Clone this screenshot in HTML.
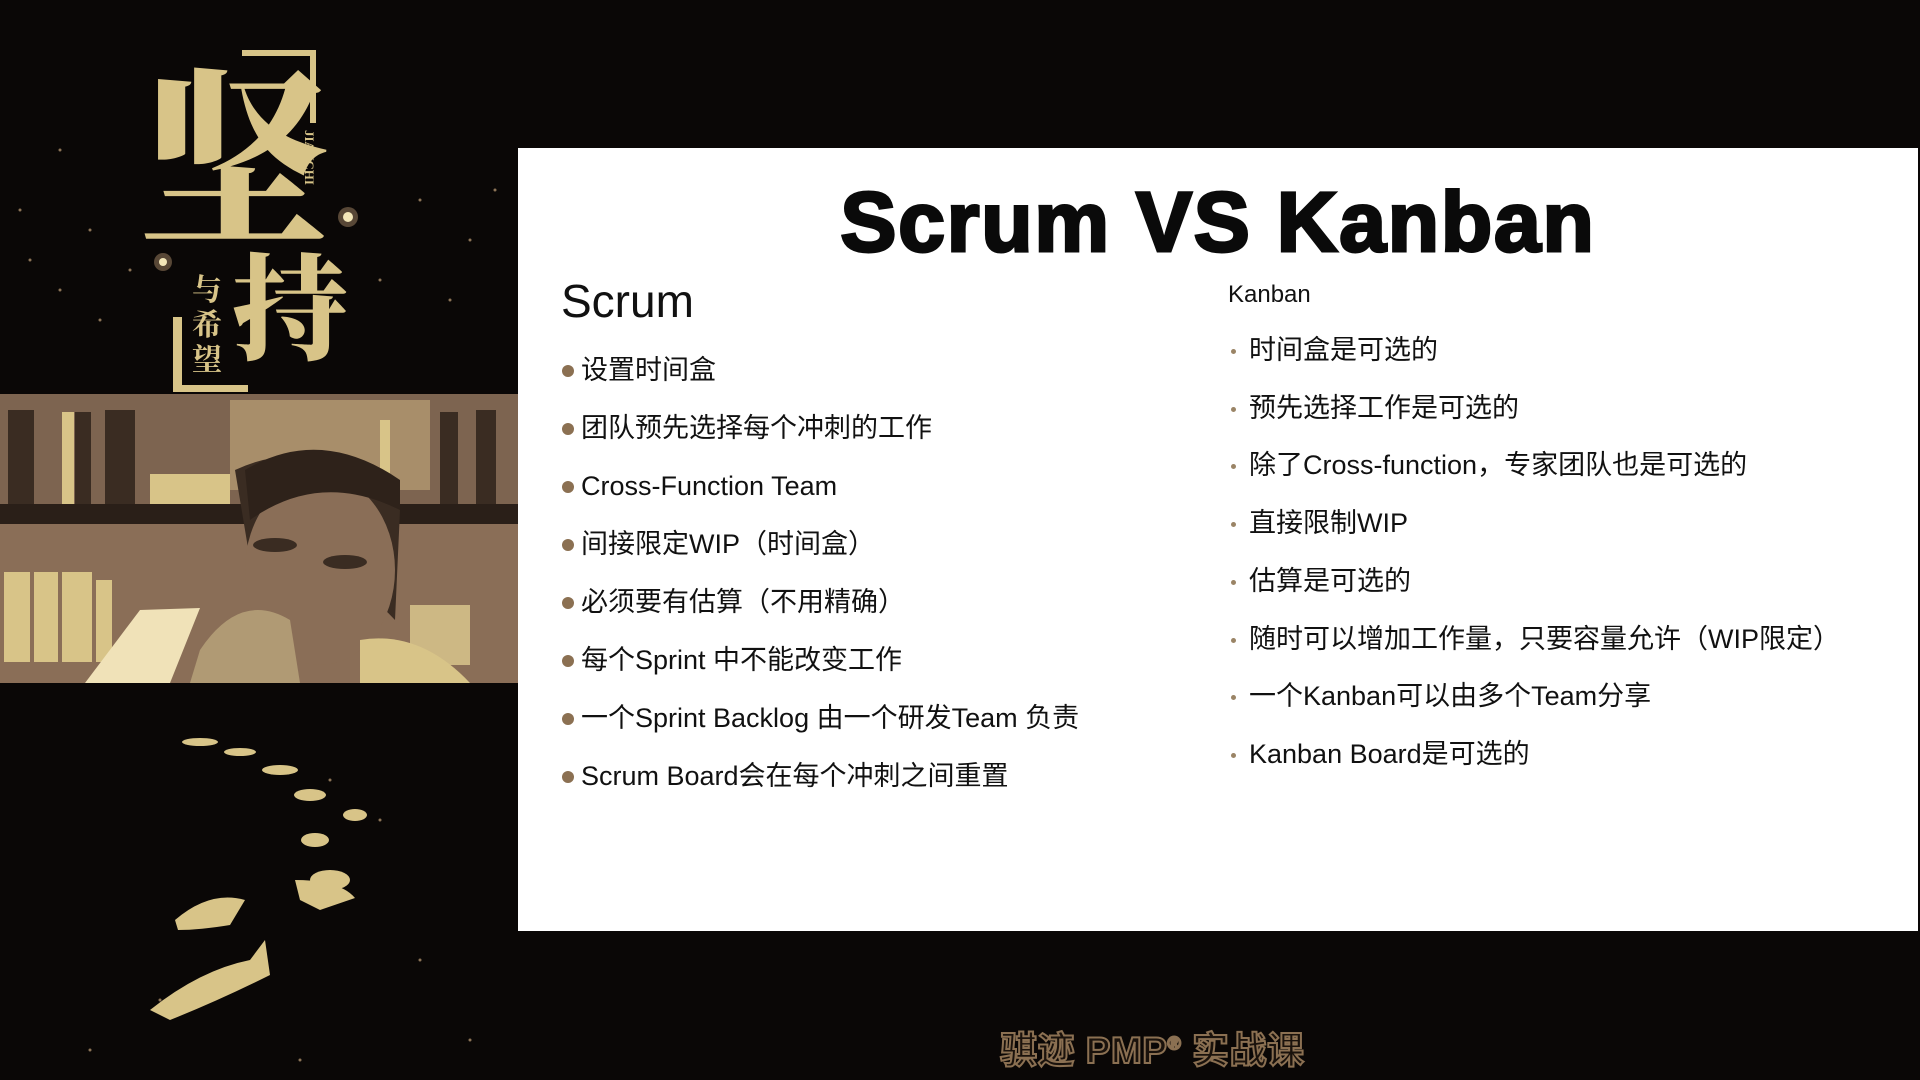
<!DOCTYPE html>
<html><head><meta charset="utf-8"><style>
html,body{margin:0;padding:0;width:1920px;height:1080px;overflow:hidden;background:#0a0706;}
body{position:relative;font-family:"Liberation Sans","Noto Sans CJK SC",sans-serif;}
.slide{position:absolute;left:518px;top:148px;width:1400px;height:783px;background:#fff;}
.title{position:absolute;left:0;width:1400px;top:32px;text-align:center;font-size:84px;font-weight:bold;color:#0a0a0a;-webkit-text-stroke:3px #0a0a0a;letter-spacing:1.8px;line-height:1;}
.abs{position:absolute;white-space:nowrap;color:#111;line-height:1;}
.l{font-size:27px;}
.dot{position:absolute;width:12px;height:12px;border-radius:50%;background:#8b7052;}
.sd{position:absolute;width:5px;height:5px;border-radius:50%;background:#9a8466;}
</style></head><body>
<svg style="position:absolute;left:0;top:0" width="518" height="1080">
<rect width="518" height="1080" fill="#0a0706"/>
<g fill="#8c7356">
<circle cx="60" cy="150" r="1.5"/><circle cx="90" cy="230" r="1.5"/><circle cx="30" cy="260" r="1.5"/><circle cx="420" cy="200" r="1.5"/><circle cx="470" cy="240" r="1.5"/><circle cx="450" cy="300" r="1.5"/><circle cx="100" cy="320" r="1.5"/><circle cx="380" cy="280" r="1.5"/><circle cx="60" cy="290" r="1.5"/><circle cx="495" cy="190" r="1.5"/><circle cx="20" cy="210" r="1.5"/><circle cx="130" cy="270" r="1.5"/>
<circle cx="330" cy="780" r="1.5"/><circle cx="380" cy="820" r="1.5"/><circle cx="230" cy="900" r="1.5"/><circle cx="420" cy="960" r="1.5"/><circle cx="160" cy="1000" r="1.5"/><circle cx="470" cy="1040" r="1.5"/><circle cx="300" cy="1060" r="1.5"/><circle cx="90" cy="1050" r="1.5"/>
</g>
<circle cx="348" cy="217" r="10" fill="#8c7356" opacity=".6"/><circle cx="348" cy="217" r="5" fill="#f3e6b8"/>
<circle cx="163" cy="262" r="9" fill="#8c7356" opacity=".6"/><circle cx="163" cy="262" r="4" fill="#f3e6b8"/>
<g fill="#d8c488">
<rect x="242" y="50" width="74" height="6"/><rect x="310" y="50" width="6" height="73"/>
<rect x="173" y="317" width="9" height="73"/><rect x="173" y="385" width="75" height="7"/>
</g>
<text x="140" y="230" font-family="Noto Serif CJK SC,serif" font-size="190" font-weight="900" fill="#d8c488">坚</text>
<text x="232" y="350" font-family="Noto Serif CJK SC,serif" font-size="115" font-weight="900" fill="#d8c488">持</text>
<text x="192" y="300" font-family="Noto Serif CJK SC,serif" font-size="30" font-weight="bold" fill="#d8c488">与</text>
<text x="192" y="335" font-family="Noto Serif CJK SC,serif" font-size="30" font-weight="bold" fill="#d8c488">希</text>
<text x="192" y="370" font-family="Noto Serif CJK SC,serif" font-size="30" font-weight="bold" fill="#d8c488">望</text>
<text transform="translate(305,130) rotate(90)" font-size="13" font-weight="bold" fill="#d8c488" font-family="Liberation Serif,serif">JIANCHI</text>
<rect x="0" y="394" width="518" height="289" fill="#8a6e57"/>
<rect x="0" y="394" width="518" height="110" fill="#7d6450"/>
<rect x="230" y="400" width="200" height="90" fill="#a88e6a"/>
<g fill="#3a2c22"><rect x="8" y="410" width="26" height="100"/><rect x="75" y="412" width="16" height="98"/><rect x="105" y="410" width="30" height="100"/><rect x="440" y="412" width="18" height="98"/><rect x="476" y="410" width="20" height="100"/></g>
<g fill="#d8c488"><rect x="62" y="412" width="12" height="98"/><rect x="150" y="474" width="80" height="30"/><rect x="380" y="420" width="10" height="90"/></g>
<rect x="0" y="504" width="518" height="20" fill="#2a1f18"/>
<g fill="#d8c488"><rect x="4" y="572" width="26" height="90"/><rect x="34" y="572" width="24" height="90"/><rect x="62" y="572" width="30" height="90"/><rect x="96" y="580" width="16" height="82"/></g>
<path d="M140 610 L200 608 L170 683 L85 683 Z" fill="#f0e2b8"/>
<path d="M235 470 Q320 430 400 510 L395 620 Q340 560 250 560 Z" fill="#3a2c22"/>
<ellipse cx="320" cy="570" rx="75" ry="95" fill="#8a6e57"/>
<path d="M245 470 Q320 425 400 480 L400 510 Q320 470 250 520 Z" fill="#2e221a"/>
<ellipse cx="275" cy="545" rx="22" ry="7" fill="#3a2c22"/><ellipse cx="345" cy="562" rx="22" ry="7" fill="#3a2c22"/>
<path d="M200 650 Q240 590 290 620 L300 683 L190 683 Z" fill="#b09a74"/>
<rect x="410" y="605" width="60" height="60" fill="#cdb884"/>
<path d="M360 640 Q420 630 470 683 L360 683 Z" fill="#d8c488"/>
<g fill="#d8c488">
<ellipse cx="200" cy="742" rx="18" ry="4"/><ellipse cx="240" cy="752" rx="16" ry="4"/><ellipse cx="280" cy="770" rx="18" ry="5"/><ellipse cx="310" cy="795" rx="16" ry="6"/><ellipse cx="355" cy="815" rx="12" ry="6"/><ellipse cx="315" cy="840" rx="14" ry="7"/><ellipse cx="330" cy="880" rx="20" ry="10"/>
<path d="M175 920 Q210 890 245 900 L230 925 Q200 930 178 930 Z"/>
<path d="M295 880 Q340 880 355 898 L320 910 L300 900 Z"/>
<path d="M150 1010 Q200 970 250 960 L265 940 L270 975 Q220 1000 170 1020 Z"/>
</g>
</svg>

<div class="slide">
<div class="title">Scrum VS Kanban</div>
<div class="abs" style="left:43px;top:130px;font-size:46px;">Scrum</div>

<div class="dot" style="left:44px;top:217px"></div><div class="abs l" style="left:63px;top:209px">设置时间盒</div>
<div class="dot" style="left:44px;top:275px"></div><div class="abs l" style="left:63px;top:267px">团队预先选择每个冲刺的工作</div>
<div class="dot" style="left:44px;top:333px"></div><div class="abs l" style="left:63px;top:325px">Cross-Function Team</div>
<div class="dot" style="left:44px;top:391px"></div><div class="abs l" style="left:63px;top:383px">间接限定WIP（时间盒）</div>
<div class="dot" style="left:44px;top:449px"></div><div class="abs l" style="left:63px;top:441px">必须要有估算（不用精确）</div>
<div class="dot" style="left:44px;top:507px"></div><div class="abs l" style="left:63px;top:499px">每个Sprint 中不能改变工作</div>
<div class="dot" style="left:44px;top:565px"></div><div class="abs l" style="left:63px;top:557px">一个Sprint Backlog 由一个研发Team 负责</div>
<div class="dot" style="left:44px;top:623px"></div><div class="abs l" style="left:63px;top:615px">Scrum Board会在每个冲刺之间重置</div>

<div class="abs" style="left:710px;top:135px;font-size:24px;">Kanban</div>
<div class="sd" style="left:713px;top:201px"></div><div class="abs l" style="left:731px;top:189px">时间盒是可选的</div>
<div class="sd" style="left:713px;top:259px"></div><div class="abs l" style="left:731px;top:247px">预先选择工作是可选的</div>
<div class="sd" style="left:713px;top:316px"></div><div class="abs l" style="left:731px;top:304px">除了Cross-function，专家团队也是可选的</div>
<div class="sd" style="left:713px;top:374px"></div><div class="abs l" style="left:731px;top:362px">直接限制WIP</div>
<div class="sd" style="left:713px;top:432px"></div><div class="abs l" style="left:731px;top:420px">估算是可选的</div>
<div class="sd" style="left:713px;top:490px"></div><div class="abs l" style="left:731px;top:478px">随时可以增加工作量，只要容量允许（WIP限定）</div>
<div class="sd" style="left:713px;top:547px"></div><div class="abs l" style="left:731px;top:535px">一个Kanban可以由多个Team分享</div>
<div class="sd" style="left:713px;top:605px"></div><div class="abs l" style="left:731px;top:593px">Kanban Board是可选的</div>
</div>

<div class="abs" style="left:1000px;top:1032px;font-size:37px;font-weight:bold;color:#1a120c;-webkit-text-stroke:2px #8b7052;letter-spacing:0.5px;">骐迹 PMP<sup style="font-size:18px">®</sup> 实战课</div>
</body></html>
